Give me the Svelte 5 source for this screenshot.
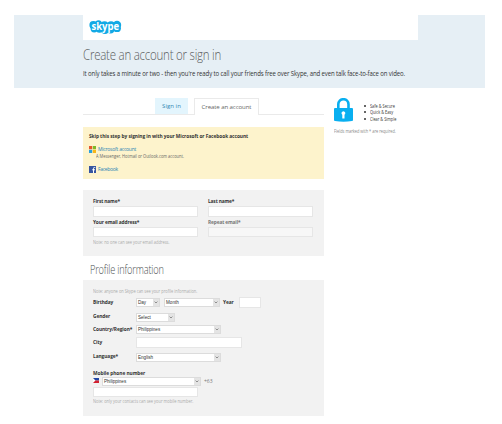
<script>
  const perks = ['Safe & Secure', 'Quick & Easy', 'Clear & Simple'];
</script>

{#snippet select(text, width)}
  <div class="select" style="width:{width}px">
    <span>{text}</span>
    <i><svg width="4" height="3" viewBox="0 0 4 3"><path d="M.6.6 2 2 3.4.6" fill="none" stroke="#777" stroke-width=".8" /></svg></i>
  </div>
{/snippet}

<div class="page">
  <header>
    <div class="logo">
      <svg width="34" height="19" viewBox="0 0 34 19">
        <g fill="#12a9e5">
          <circle cx="4.4" cy="5" r="4" /><circle cx="9.5" cy="3.8" r="3.5" />
          <circle cx="15.5" cy="5.3" r="4" /><circle cx="22" cy="5.3" r="4" />
          <circle cx="28" cy="5" r="4.2" /><circle cx="28" cy="8.2" r="3.9" />
          <circle cx="5.2" cy="8.8" r="3.6" /><circle cx="10.5" cy="9.2" r="3.6" />
          <circle cx="16" cy="10.3" r="3.8" /><circle cx="21.5" cy="9.8" r="3.8" />
          <rect x="4" y="3" width="25" height="8" />
        </g>
        <text x="2.5" y="9.6" textLength="27.5" lengthAdjust="spacingAndGlyphs" font-family="Open Sans, sans-serif" font-size="10" font-weight="700" fill="#fff">skype</text>
      </svg>
    </div>
    <h1>Create an account or sign in</h1>
    <p class="lead">It only takes a minute or two - then you're ready to call your friends free over Skype, and even talk face-to-face on video.</p>
  </header>

  <div class="body">
    <main>
      <nav>
        <a class="signin">Sign in</a>
        <a class="create">Create an account</a>
      </nav>

      <section class="skip">
        <b>Skip this step by signing in with your Microsoft or Facebook account</b>
        <div class="provider ms">
          <svg width="7" height="7" viewBox="0 0 7 7"><path fill="#e8562a" d="M0 0h3.2v3.2H0z" /><path fill="#7db928" d="M3.8 0H7v3.2H3.8z" /><path fill="#2a9fdc" d="M0 3.8h3.2V7H0z" /><path fill="#f8b517" d="M3.8 3.8H7V7H3.8z" /></svg>
          <a>Microsoft account</a>
        </div>
        <p class="hint">A Messenger, Hotmail or Outlook.com account.</p>
        <div class="provider fb">
          <svg width="7" height="7" viewBox="0 0 7 7"><path fill="#3655a0" d="M0 0h7v7H0z" /><path d="M6.2 1.5H5.4Q4.5 1.5 4.5 2.4V7M3.2 3.8H6" fill="none" stroke="#fff" stroke-width="1" /></svg>
          <a>Facebook</a>
        </div>
      </section>

      <section class="panel names">
        <div class="cols">
          <label>First name*<input /></label>
          <label>Last name*<input /></label>
        </div>
        <div class="cols">
          <label>Your email address*<input /></label>
          <label class="off">Repeat email*<input disabled /></label>
        </div>
        <p class="note">Note: no one can see your email address.</p>
      </section>

      <h2>Profile information</h2>

      <section class="panel profile">
        <p class="note">Note: anyone on Skype can see your profile information.</p>
        <div class="row birth">
          <b>Birthday</b>{@render select('Day', 24)}<span class="month">{@render select('Month', 56)}</span><b class="year">Year</b><input />
        </div>
        <div class="row gender"><b>Gender</b>{@render select('Select', 39)}</div>
        <div class="row country"><b>Country/Region*</b>{@render select('Philippines', 85)}</div>
        <div class="row city"><b>City</b><input /></div>
        <div class="row lang"><b>Language*</b>{@render select('English', 85)}</div>
        <div class="mobile"><b>Mobile phone number</b></div>
        <div class="phone">
          <svg width="6" height="5" viewBox="0 0 6 5"><path fill="#2346a5" d="M0 0h6v2.5H0z" /><path fill="#d3202f" d="M0 2.5h6V5H0z" /><path fill="#fff" d="M0 0 2.4 2.5 0 5z" /></svg>
          {@render select('Philippines', 99)}
          <span class="code">+63</span>
        </div>
        <input class="number" />
        <p class="note">Note: only your contacts can see your mobile number.</p>
      </section>
    </main>

    <aside>
      <div class="safe">
        <svg width="19" height="24" viewBox="0 0 19 24">
          <path d="M4.3 11V6.3a5.1 5.1 0 0 1 10.2 0V11" fill="none" stroke="#09aff0" stroke-width="2.6" />
          <path d="M1 10h17q1 0 1 1v11q0 .8-1 1-8.5 1.4-17 0-1-.2-1-1V11q0-1 1-1z" fill="#09aff0" />
          <path d="M9.4 13.2a2 2 0 0 1 1.1 3.6V20.5H8.3V16.8a2 2 0 0 1 1.1-3.6z" fill="#fff" />
        </svg>
        <ul>
          {#each perks as perk}<li><span>{perk}</span></li>{/each}
        </ul>
      </div>
      <p>Fields marked with * are required.</p>
    </aside>
  </div>
</div>

<style>
  :global(body) { background: #fff; }
  .page { box-sizing: border-box; width: 502px; height: 424px; padding: 15px 17px 0 14px; overflow: hidden; font: 5px/7px "Open Sans", "Noto Sans", sans-serif; color: #333; }
  .page * { box-sizing: border-box; white-space: nowrap; }
  p, h1, h2, ul { margin: 0; padding: 0; }
  svg { display: block; flex: none; }
  b { font-weight: 700; }
  header { height: 73px; background: #e6eff5; padding-left: 69px; }
  .logo { width: 335px; height: 25px; background: #fff; padding: 5px 0 0 6px; }
  h1, h2, .lead, .note, .hint, li span, aside p { width: max-content; transform-origin: 0 50%; }
  h1 { font-size: 14.4px; line-height: 18px; font-weight: 300; color: #5c6060; margin-top: 6px; letter-spacing: -.3px; transform: scaleX(.8); }
  .lead { font-size: 7.3px; line-height: 10px; margin-top: 4px; letter-spacing: -.13px; color: #333; transform: scaleX(.825); }
  .body { display: flex; padding: 10px 0 0 69px; }
  main { width: 241px; flex: none; }
  nav { display: flex; height: 17px; border-bottom: 1px solid #eaeaea; padding-left: 72px; }
  nav a { font-size: 6.1px; line-height: 16px; text-align: center; }
  .signin { width: 33px; height: 16px; background: #e3f5fd; color: #3689b5; }
  .create { width: 65px; height: 17px; margin-left: 6px; border: 1px solid #eaeaea; border-bottom: 0; background: #fff; color: #666; letter-spacing: -.1px; }
  .skip { height: 52px; margin-top: 12px; padding: 6px 0 0 6px; background: #fdf3cc; }
  .skip > b { display: block; letter-spacing: -.05px; font-size: 4.8px; }
  .provider { display: flex; align-items: center; gap: 2px; height: 7px; }
  .provider a { color: #2a83b5; letter-spacing: -.22px; }
  .fb a { letter-spacing: -.3px; }
  .ms { margin-top: 6px; }
  .fb { margin-top: 6px; }
  .hint { margin-left: 7px; font-size: 4.6px; color: #666; transform: scaleX(.873); }
  .panel { background: #f2f2f2; padding-left: 10px; }
  .names { height: 65.5px; margin-top: 11px; padding-top: 8px; }
  .cols { display: flex; gap: 10px; height: 20.5px; }
  label { width: 105px; font-weight: 700; font-size: 4.8px; letter-spacing: -.12px; }
  label input { display: block; width: 105px; margin-top: 1px; }
  .off { color: #777; }
  input { height: 10.5px; padding: 0; border: 1px solid #e6e6e6; background: #fff; border-radius: 0; }
  input:disabled { background: #f7f7f7; }
  .note { color: #aaa; font-size: 4.8px; transform: scaleX(.83); }
  .names .note { margin-top: 0; }
  h2 { margin: 4px 0 0 7px; height: 20px; font-size: 11.8px; line-height: 19px; font-weight: 300; color: #4c5050; letter-spacing: -.22px; transform: scaleX(.78); }
  .profile { height: 136px; padding-top: 8px; }
  .row { display: flex; align-items: center; height: 10px; }
  .row b { width: 43px; font-size: 4.8px; letter-spacing: -.06px; margin-top: -1px; }
  .select { display: flex; height: 9px; flex: none; border: 1px solid #dcdcdc; background: #fff; font: 4.6px/7px "Liberation Sans", sans-serif; color: #333; padding-left: 1px; }
  .select span { flex: 1; }
  .select i { display: flex; width: 6px; align-items: center; justify-content: center; background: #e4e4e4; }
  .birth { margin-top: 3px; }
  .month { margin-left: 4px; }
  .row .year { width: 16px; margin-left: 3px; }
  .birth input { width: 22px; }
  .gender { margin-top: 4.5px; }
  .country { margin-top: 2.5px; }
  .city { margin-top: 3px; }
  .city input { width: 106px; }
  .lang { margin-top: 4.5px; }
  .mobile { margin-top: 7.5px; height: 7px; font-size: 4.8px; letter-spacing: -.04px; }
  .phone { display: flex; height: 10px; align-items: center; }
  .phone svg { margin-right: 3px; margin-top: -2px; }
  .phone .select svg { margin: 0; }
  .code { margin-left: 3px; color: #777; }
  .number { display: block; width: 105px; }
  .profile .number + .note { margin-top: 1px; }
  aside { padding-left: 10px; }
  .safe { display: flex; height: 25px; }
  ul { list-style: none; padding: 5px 0 0 11px; font-size: 4.9px; line-height: 6.3px; }
  li { display: flex; align-items: center; gap: 3.5px; }
  li span { transform: scaleX(.79); }
  li::before { content: ""; width: 2px; height: 2px; border-radius: 50%; background: #333; }
  aside p { margin-top: 5px; font-size: 4.8px; color: #888; transform: scaleX(.81); }
</style>
